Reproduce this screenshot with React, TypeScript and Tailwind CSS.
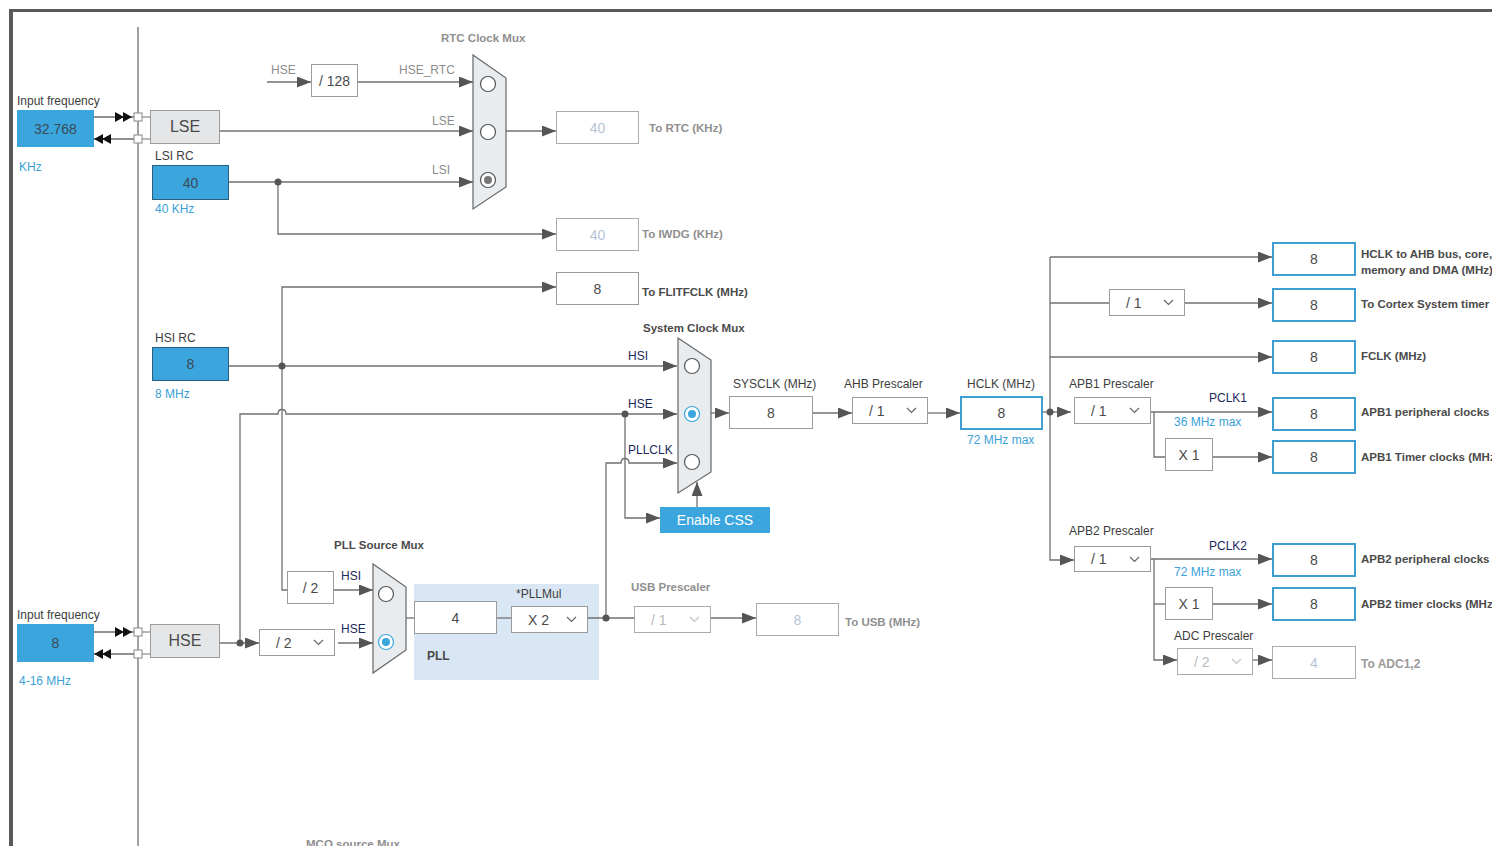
import React from 'react';

type BoxV = 'input' | 'inputB' | 'osc' | 'val' | 'out' | 'off';

const boxCls: Record<BoxV, string> = {
  input: 'bg-[#3aa6dd] text-[#3c4a56] text-[14px]',
  inputB: 'bg-[#3aa6dd] border border-[#2b5f80] text-[#3c4a56] text-[14px]',
  osc: 'bg-[#e4e6e8] border border-[#9b9b9b] text-[#4a4a4a] text-[16px]',
  val: 'bg-white border border-[#9b9b9b] text-[#4a4a4a] text-[14px]',
  out: 'bg-white border-2 border-[#3e9ecf] text-[#4a4a4a] text-[14px]',
  off: 'bg-white border border-[#ababab] text-[#b3c5d6] text-[14px]',
};

const boxes: { x: number; y: number; w: number; h: number; v: BoxV; t: string }[] = [
  { x: 17, y: 110, w: 77, h: 37, v: 'input', t: '32.768' },
  { x: 150, y: 110, w: 70, h: 34, v: 'osc', t: 'LSE' },
  { x: 152, y: 165, w: 77, h: 35, v: 'inputB', t: '40' },
  { x: 311, y: 64, w: 47, h: 33, v: 'val', t: '/ 128' },
  { x: 556, y: 111, w: 83, h: 33, v: 'off', t: '40' },
  { x: 556, y: 218, w: 83, h: 33, v: 'off', t: '40' },
  { x: 556, y: 272, w: 83, h: 33, v: 'val', t: '8' },
  { x: 152, y: 347, w: 77, h: 34, v: 'inputB', t: '8' },
  { x: 729, y: 396, w: 84, h: 33, v: 'val', t: '8' },
  { x: 960, y: 396, w: 83, h: 34, v: 'out', t: '8' },
  { x: 287, y: 571, w: 47, h: 33, v: 'val', t: '/ 2' },
  { x: 17, y: 624, w: 77, h: 38, v: 'input', t: '8' },
  { x: 150, y: 624, w: 70, h: 34, v: 'osc', t: 'HSE' },
  { x: 414, y: 601, w: 83, h: 33, v: 'val', t: '4' },
  { x: 756, y: 603, w: 83, h: 33, v: 'off', t: '8' },
  { x: 1165, y: 438, w: 48, h: 33, v: 'val', t: 'X 1' },
  { x: 1165, y: 587, w: 48, h: 33, v: 'val', t: 'X 1' },
  { x: 1272, y: 242, w: 84, h: 34, v: 'out', t: '8' },
  { x: 1272, y: 288, w: 84, h: 34, v: 'out', t: '8' },
  { x: 1272, y: 340, w: 84, h: 34, v: 'out', t: '8' },
  { x: 1272, y: 397, w: 84, h: 34, v: 'out', t: '8' },
  { x: 1272, y: 440, w: 84, h: 34, v: 'out', t: '8' },
  { x: 1272, y: 543, w: 84, h: 34, v: 'out', t: '8' },
  { x: 1272, y: 587, w: 84, h: 34, v: 'out', t: '8' },
  { x: 1272, y: 646, w: 84, h: 33, v: 'off', t: '4' },
];

const dropdowns: { x: number; y: number; w: number; h: number; t: string; off?: boolean }[] = [
  { x: 259, y: 629, w: 76, h: 27, t: '/ 2' },
  { x: 511, y: 606, w: 77, h: 27, t: 'X 2' },
  { x: 634, y: 606, w: 77, h: 27, t: '/ 1', off: true },
  { x: 852, y: 397, w: 76, h: 27, t: '/ 1' },
  { x: 1109, y: 289, w: 76, h: 27, t: '/ 1' },
  { x: 1074, y: 397, w: 77, h: 27, t: '/ 1' },
  { x: 1074, y: 546, w: 77, h: 26, t: '/ 1' },
  { x: 1177, y: 648, w: 76, h: 27, t: '/ 2', off: true },
];

const dark = 'text-[12px] text-[#3d3d3d]';
const grey = 'text-[12px] text-[#8c8c8c]';
const navy = 'text-[12px] text-[#1b2a5c]';
const blue = 'text-[12px] text-[#3a9fd6]';
const bold = 'text-[11.5px] font-bold text-[#4a4a4a]';
const boldGrey = 'text-[11.5px] font-bold text-[#8f8f8f]';

const labels: { x: number; y: number; c: string; t: string }[] = [
  { x: 17, y: 101, c: dark, t: 'Input frequency' },
  { x: 19, y: 167, c: blue, t: 'KHz' },
  { x: 155, y: 156, c: dark, t: 'LSI RC' },
  { x: 155, y: 209, c: blue, t: '40 KHz' },
  { x: 271, y: 70, c: grey, t: 'HSE' },
  { x: 399, y: 70, c: grey, t: 'HSE_RTC' },
  { x: 432, y: 121, c: grey, t: 'LSE' },
  { x: 432, y: 170, c: grey, t: 'LSI' },
  { x: 441, y: 38, c: boldGrey, t: 'RTC Clock Mux' },
  { x: 649, y: 128, c: boldGrey, t: 'To RTC (KHz)' },
  { x: 642, y: 234, c: boldGrey, t: 'To IWDG (KHz)' },
  { x: 642, y: 292, c: bold, t: 'To FLITFCLK (MHz)' },
  { x: 155, y: 338, c: dark, t: 'HSI RC' },
  { x: 155, y: 394, c: blue, t: '8 MHz' },
  { x: 643, y: 328, c: bold, t: 'System Clock Mux' },
  { x: 628, y: 356, c: navy, t: 'HSI' },
  { x: 628, y: 404, c: navy, t: 'HSE' },
  { x: 628, y: 450, c: navy, t: 'PLLCLK' },
  { x: 733, y: 384, c: dark, t: 'SYSCLK (MHz)' },
  { x: 844, y: 384, c: dark, t: 'AHB Prescaler' },
  { x: 967, y: 384, c: dark, t: 'HCLK (MHz)' },
  { x: 967, y: 440, c: blue, t: '72 MHz max' },
  { x: 1069, y: 384, c: dark, t: 'APB1 Prescaler' },
  { x: 1209, y: 398, c: navy, t: 'PCLK1' },
  { x: 1174, y: 422, c: blue, t: '36 MHz max' },
  { x: 1069, y: 531, c: dark, t: 'APB2 Prescaler' },
  { x: 1209, y: 546, c: navy, t: 'PCLK2' },
  { x: 1174, y: 572, c: blue, t: '72 MHz max' },
  { x: 1174, y: 636, c: dark, t: 'ADC Prescaler' },
  { x: 1361, y: 254, c: bold, t: 'HCLK to AHB bus, core,' },
  { x: 1361, y: 270, c: bold, t: 'memory and DMA (MHz)' },
  { x: 1361, y: 304, c: bold, t: 'To Cortex System timer (MHz)' },
  { x: 1361, y: 356, c: bold, t: 'FCLK (MHz)' },
  { x: 1361, y: 412, c: bold, t: 'APB1 peripheral clocks (MHz)' },
  { x: 1361, y: 457, c: bold, t: 'APB1 Timer clocks (MHz)' },
  { x: 1361, y: 559, c: bold, t: 'APB2 peripheral clocks (MHz)' },
  { x: 1361, y: 604, c: bold, t: 'APB2 timer clocks (MHz)' },
  { x: 1361, y: 664, c: 'text-[12px] font-bold text-[#9a9a9a]', t: 'To ADC1,2' },
  { x: 334, y: 545, c: bold, t: 'PLL Source Mux' },
  { x: 341, y: 576, c: navy, t: 'HSI' },
  { x: 341, y: 629, c: navy, t: 'HSE' },
  { x: 17, y: 615, c: dark, t: 'Input frequency' },
  { x: 19, y: 681, c: blue, t: '4-16 MHz' },
  { x: 516, y: 594, c: dark, t: '*PLLMul' },
  { x: 427, y: 656, c: 'text-[12px] font-bold text-[#4a4a4a]', t: 'PLL' },
  { x: 631, y: 587, c: boldGrey, t: 'USB Prescaler' },
  { x: 845, y: 622, c: boldGrey, t: 'To USB (MHz)' },
  { x: 306, y: 844, c: boldGrey, t: 'MCO source Mux' },
];

// wires ending in an arrow head
const arrows = [
  'M267 82 L311 82',
  'M358 82 L473 82',
  'M220 131 L473 131',
  'M229 182 L473 182',
  'M278 182 L278 234 L556 234',
  'M506 131 L556 131',
  'M229 366 L677 366',
  'M287 590 L282 590 L282 287 L556 287',
  'M240 643 L240 414 L278 414 C278 408 286 408 286 414 L677 414',
  'M220 643 L259 643',
  'M338 643 L373 643',
  'M334 590 L373 590',
  'M711 618 L756 618',
  'M606 618 L606 463 L621 463 C621 457 629 457 629 463 L677 463',
  'M625 414 L625 518 L660 518',
  'M697 507 L697 482',
  'M711 413 L729 413',
  'M813 413 L852 413',
  'M928 413 L960 413',
  'M1043 412 L1071 412',
  'M1050 257 L1050 560 L1074 560',
  'M1050 257 L1272 257',
  'M1185 303 L1272 303',
  'M1050 357 L1272 357',
  'M1151 412 L1272 412',
  'M1213 457 L1272 457',
  'M1151 559 L1272 559',
  'M1154 559 L1154 660 L1177 660',
  'M1213 604 L1272 604',
  'M1253 660 L1272 660',
];

// plain wires
const wires = [
  'M138 27 L138 846',
  'M1050 303 L1109 303',
  'M406 618 L414 618',
  'M497 618 L511 618',
  'M588 618 L634 618',
  'M1154 412 L1154 457 L1165 457',
  'M1154 604 L1165 604',
];

const dots: [number, number][] = [
  [278, 182], [282, 366], [240, 643], [625, 414], [606, 618], [1050, 412],
];

const Chevron: React.FC<{ off?: boolean }> = ({ off }) => (
  <svg width="11" height="7" viewBox="0 0 11 7" className="shrink-0">
    <path d="M1 1 L5.5 5.5 L10 1" fill="none" stroke={off ? '#c4c4c4' : '#666'} strokeWidth="1.2" />
  </svg>
);

const Pin: React.FC<{ y: number }> = ({ y }) => (
  <g>
    <line x1="94" y1={y} x2="134" y2={y} stroke="#222" strokeWidth="1.2" />
    <rect x="134" y={y - 4} width="8" height="8" fill="#fff" stroke="#888" />
    <line x1="142" y1={y} x2="150" y2={y} stroke="#888" strokeWidth="1.2" />
  </g>
);

const InOut: React.FC<{ top: number; bottom: number }> = ({ top, bottom }) => (
  <g>
    <Pin y={top} />
    <Pin y={bottom} />
    <polygon points={`115,${top - 5} 124,${top} 115,${top + 5}`} fill="#111" />
    <polygon points={`123,${top - 5} 132,${top} 123,${top + 5}`} fill="#111" />
    <polygon points={`103,${bottom - 5} 94,${bottom} 103,${bottom + 5}`} fill="#111" />
    <polygon points={`111,${bottom - 5} 102,${bottom} 111,${bottom + 5}`} fill="#111" />
  </g>
);

const Radio: React.FC<{ x: number; y: number; sel?: 'grey' | 'blue' }> = ({ x, y, sel }) => (
  <g>
    <circle cx={x} cy={y} r="7.5" fill="#fff" stroke={sel === 'blue' ? '#3aa6dd' : '#555'} strokeWidth="1.2" />
    {sel && <circle cx={x} cy={y} r="4" fill={sel === 'blue' ? '#3aa6dd' : '#777'} />}
  </g>
);

export default function App() {
  return (
    <div className="relative w-[1492px] h-[846px] overflow-hidden bg-white font-['Liberation_Sans',Arial,sans-serif]">
      {/* outer frame of the clock tree panel */}
      <div className="absolute left-[9px] top-[9px] w-[1500px] h-[860px] border-l-4 border-t-[3px] border-[#5a5a5a]" />

      {/* PLL block background */}
      <div className="absolute left-[414px] top-[584px] w-[185px] h-[96px] bg-[#d9e7f4]" />

      <svg className="absolute inset-0" width="1492" height="846">
        <defs>
          <marker id="arr" viewBox="0 0 14 11" refX="14" refY="5.5" markerWidth="14" markerHeight="11" markerUnits="userSpaceOnUse" orient="auto">
            <path d="M0 0 L14 5.5 L0 11 z" fill="#555" />
          </marker>
        </defs>
        {wires.map((d, i) => (
          <path key={`w${i}`} d={d} fill="none" stroke="#707070" strokeWidth="1.3" />
        ))}
        {arrows.map((d, i) => (
          <path key={`a${i}`} d={d} fill="none" stroke="#707070" strokeWidth="1.3" markerEnd="url(#arr)" />
        ))}
        {dots.map(([x, y], i) => (
          <circle key={`d${i}`} cx={x} cy={y} r="3.5" fill="#555" />
        ))}

        <InOut top={117} bottom={139} />
        <InOut top={632} bottom={654} />

        {/* RTC clock mux */}
        <polygon points="473,55 506,78 506,187 473,209" fill="#e8ecef" stroke="#666" strokeWidth="1.2" />
        <Radio x={488} y={84} />
        <Radio x={488} y={132} />
        <Radio x={488} y={180} sel="grey" />

        {/* System clock mux */}
        <polygon points="678,338 711,360 711,472 678,493" fill="#e8ecef" stroke="#666" strokeWidth="1.2" />
        <Radio x={692} y={366} />
        <Radio x={692} y={414} sel="blue" />
        <Radio x={692} y={462} />

        {/* PLL source mux */}
        <polygon points="373,564 406,587 406,650 373,673" fill="#e8ecef" stroke="#666" strokeWidth="1.2" />
        <Radio x={386} y={594} />
        <Radio x={386} y={642} sel="blue" />
      </svg>

      {boxes.map((b, i) => (
        <div
          key={`b${i}`}
          className={`absolute flex items-center justify-center leading-none ${boxCls[b.v]}`}
          style={{ left: b.x, top: b.y, width: b.w, height: b.h }}
        >
          {b.t}
        </div>
      ))}

      {dropdowns.map((d, i) => (
        <div
          key={`dd${i}`}
          className={`absolute flex items-center justify-between pl-4 pr-2.5 bg-white border text-[14px] leading-none ${
            d.off ? 'border-[#ababab] text-[#b9b9b9]' : 'border-[#9b9b9b] text-[#4a4a4a]'
          }`}
          style={{ left: d.x, top: d.y, width: d.w, height: d.h }}
        >
          <span>{d.t}</span>
          <Chevron off={d.off} />
        </div>
      ))}

      <div className="absolute left-[660px] top-[507px] w-[110px] h-[26px] flex items-center justify-center bg-[#3aa6dd] text-white text-[14px] leading-none">
        Enable CSS
      </div>

      {labels.map((l, i) => (
        <div
          key={`l${i}`}
          className={`absolute whitespace-nowrap leading-[14px] ${l.c}`}
          style={{ left: l.x, top: l.y - 7 }}
        >
          {l.t}
        </div>
      ))}
    </div>
  );
}
